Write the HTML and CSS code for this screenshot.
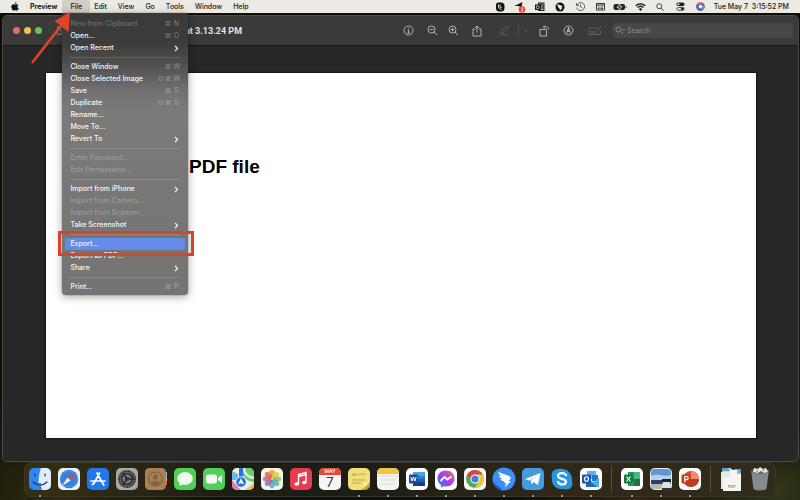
FILE: index.html
```html
<!DOCTYPE html>
<html lang="en">
<head>
<meta charset="utf-8">
<title>Preview</title>
<link rel="stylesheet" href="styles.css">
</head>
<body>
<header class="menubar">
  <button class="apple" aria-label="Apple menu"><svg width="8" height="9" viewBox="0 0 16 18"><path fill="#111" d="M11 0c.2 1.800-1.300 3.800-3.200 4C7.500 2.200 9 .4 11 0zM8.200 5.200C9 5.200 10 4.300 11.600 4.300c1.300 0 2.500.7 3.200 1.700-2.800 1.700-2.400 5.400.6 6.600-.7 2-2.200 4.700-3.900 4.700-1.200 0-1.600-.8-3.100-.8s-2 .8-3.100.8C3.200 17.300.6 13 .6 9.600c0-3.300 2.100-5.200 4.200-5.200 1.500 0 2.500.8 3.400.8z"/></svg></button>
  <nav class="menus">
    <button class="app-name">Preview</button>
    <div class="menu-holder">
      <button class="active">File</button>
      <ul class="menu">
        <li><button disabled>New from Clipboard <span class="keys">⌘<b>N</b></span></button></li>
        <li><button>Open... <span class="keys">⌘<b>O</b></span></button></li>
        <li><button>Open Recent <svg class="more" viewBox="0 0 5 7"><path d="M1 .8l2.500 2.700L1 6.200"/></svg></button></li>
        <li class="rule"></li>
        <li><button>Close Window <span class="keys">⌘<b>W</b></span></button></li>
        <li><button>Close Selected Image <span class="keys">⇧⌘<b>W</b></span></button></li>
        <li><button>Save <span class="keys">⌘<b>S</b></span></button></li>
        <li><button>Duplicate <span class="keys">⇧⌘<b>S</b></span></button></li>
        <li><button>Rename...</button></li>
        <li><button>Move To...</button></li>
        <li><button>Revert To <svg class="more" viewBox="0 0 5 7"><path d="M1 .8l2.500 2.700L1 6.200"/></svg></button></li>
        <li class="rule"></li>
        <li><button disabled>Enter Password...</button></li>
        <li><button disabled>Edit Permissions...</button></li>
        <li class="rule"></li>
        <li><button>Import from iPhone <svg class="more" viewBox="0 0 5 7"><path d="M1 .8l2.500 2.700L1 6.200"/></svg></button></li>
        <li><button disabled>Import from Camera...</button></li>
        <li><button disabled>Import from Scanner...</button></li>
        <li><button>Take Screenshot <svg class="more" viewBox="0 0 5 7"><path d="M1 .8l2.500 2.700L1 6.200"/></svg></button></li>
        <li class="rule"></li>
        <li class="marked"><button class="selected">Export...</button></li>
        <li><button>Export as PDF...</button></li>
        <li><button>Share <svg class="more" viewBox="0 0 5 7"><path d="M1 .8l2.500 2.700L1 6.200"/></svg></button></li>
        <li class="rule"></li>
        <li><button>Print... <span class="keys">⌘<b>P</b></span></button></li>
      </ul>
      <svg class="arrow" width="44" height="56" viewBox="0 0 44 56"><path d="M2 52L30 16" stroke="#e2432a" stroke-width="2.600"/><path d="M40 1L38.500 21 24.500 10z" fill="#e2432a"/></svg>
    </div>
    <button>Edit</button>
    <button>View</button>
    <button>Go</button>
    <button>Tools</button>
    <button>Window</button>
    <button>Help</button>
  </nav>
  <div class="status">
    <span><svg width="10" height="10" viewBox="0 0 20 20"><path fill="#111" d="M6 1h6a7 7 0 0 1 7 7v4a7 7 0 0 1-7 7H9a7 7 0 0 1-7-7V6a5 5 0 0 1 4-5z"/><path d="M7 5v5c0 3 3 5 6 5M10 5v5l4 2" fill="none" stroke="#eceae2" stroke-width="1.800"/></svg></span>
    <span><svg width="12" height="12" viewBox="0 0 24 24"><path fill="#111" d="M1 10L17 2l-3 12-4-4z"/><circle cx="16" cy="17" r="6.500" fill="#e8412e"/><path d="M14 14.500c3-2 5 0 3 2.500l-3 3h5" stroke="#fff" stroke-width="1.500" fill="none"/></svg></span>
    <span><svg width="10" height="10" viewBox="0 0 20 20"><path d="M6 1h13v17H6z" fill="#222"/><path d="M8 4h3m2 0h4M12 8h5m-5 4h5M8 15h9" stroke="#eceae2" stroke-width="1.500"/><path d="M0 5h11v11H0z" fill="#111"/><circle cx="5.500" cy="10.500" r="3" fill="none" stroke="#eceae2" stroke-width="1.600"/></svg></span>
    <span><svg width="10" height="10" viewBox="0 0 20 20"><circle cx="10" cy="10" r="9" fill="#111"/><path d="M4 4l11 4-2 4h2l-6 6 1-4-3-2z" fill="#eceae2"/></svg></span>
    <span><svg width="9" height="9" viewBox="0 0 18 18"><path d="M2 6a8 8 0 1 1-.500 5M1 2v5h5M9 4.500V10l3.500 2" fill="none" stroke="#444" stroke-width="1.600"/></svg></span>
    <span><svg width="9" height="8" viewBox="0 0 18 16"><path d="M1 1h16v13H1zM1 4h16M4 8h3m2 0h5M4 11h3m2 0h5" fill="none" stroke="#222" stroke-width="1.800"/></svg></span>
    <span><svg width="14" height="8" viewBox="0 0 28 16"><rect x="1" y="2" width="23" height="12" rx="4" fill="#222"/><path d="M26 6v4" stroke="#555" stroke-width="2"/><path d="M14 0L8 9h4l-1 7 7-9h-4z" fill="#222" stroke="#eceae2" stroke-width="1.500"/></svg></span>
    <span><svg width="11" height="8" viewBox="0 0 22 16"><path d="M1.500 5.500a14 14 0 0 1 19 0M5 9.200a9 9 0 0 1 12 0" fill="none" stroke="#111" stroke-width="2.600"/><path d="M7.500 12a5 5 0 0 1 7 0L11 16z" fill="#111"/></svg></span>
    <span><svg width="8" height="8" viewBox="0 0 16 16"><circle cx="6.500" cy="6.500" r="5" fill="none" stroke="#222" stroke-width="1.600"/><path d="M10.300 10.300L15 15" stroke="#222" stroke-width="1.900"/></svg></span>
    <span><svg width="9" height="9" viewBox="0 0 18 18"><rect x="1" y="1" width="16" height="7" rx="3.500" fill="#222"/><circle cx="5" cy="4.500" r="2" fill="#eceae2"/><rect x="1.800" y="10.800" width="14.400" height="5.600" rx="2.800" fill="none" stroke="#222" stroke-width="1.600"/><circle cx="12.500" cy="13.600" r="2.800" fill="#222"/></svg></span>
    <span><svg width="9" height="9" viewBox="0 0 18 18"><circle cx="9" cy="9" r="8.500" fill="#43446a"/><path d="M3 5a7 7 0 0 1 11-1" stroke="#e86ca0" stroke-width="3.500" fill="none"/><path d="M15 6a7 7 0 0 1-4 9" stroke="#50a7e8" stroke-width="3.500" fill="none"/><path d="M9 15.500A7 7 0 0 1 2.500 7" stroke="#4f63d8" stroke-width="3.500" fill="none"/><circle cx="9" cy="9" r="4" fill="#e9ecfb"/></svg></span>
    <time>Tue May 7&nbsp; 3:15:52 PM</time>
  </div>
</header>

<main class="window">
  <div class="titlebar">
    <div class="lights"><button class="close" aria-label="Close"></button><button class="minimize" aria-label="Minimize"></button><button class="zoom" aria-label="Zoom"></button></div>
    <svg class="sidebar-icon" width="12" height="9" viewBox="0 0 24 18"><path d="M1 1h22v16H1zM8 1v16" fill="none" stroke="#8b8b89" stroke-width="1.800"/></svg>
    <h1 class="title">at 3.13.24 PM</h1>
    <div class="tools">
      <button class="info" aria-label="Info"><svg width="11" height="11" viewBox="0 0 22 22"><circle cx="11" cy="11" r="9"/><path d="M9 10h2.500v6M8.500 16h5.500M11 5.500v2"/></svg></button>
      <button aria-label="Zoom out"><svg width="11" height="11" viewBox="0 0 22 22"><circle cx="9" cy="9" r="7"/><path d="M14 14l6 6M5.500 9h7"/></svg></button>
      <button aria-label="Zoom in"><svg width="11" height="11" viewBox="0 0 22 22"><circle cx="9" cy="9" r="7"/><path d="M14 14l6 6M5.500 9h7M9 5.500v7"/></svg></button>
      <button class="share" aria-label="Share"><svg width="10" height="12" viewBox="0 0 20 24"><path d="M6 8H2v14h16V8h-4M10 15V2M6 6l4-4 4 4"/></svg></button>
      <button class="highlight faint" aria-label="Highlight"><svg width="11" height="11" viewBox="0 0 22 22"><path d="M5 12L15 2l4 3-9 10-6 2zM1 20h19"/></svg></button>
      <button class="pull faint" aria-label="Highlight colour"><svg width="6" height="5" viewBox="0 0 12 10"><path d="M2 3l4 4 4-4"/></svg></button>
      <button class="wide" aria-label="Rotate"><svg width="11" height="12" viewBox="0 0 22 24"><path d="M2 9h13v13H2zM9 4h6c3 0 4 2 4 5M12 1L9 4l3 3"/></svg></button>
      <button class="wide" aria-label="Markup"><svg width="11" height="11" viewBox="0 0 22 22"><circle cx="11" cy="11" r="9"/><path d="M7 17l4-12 4 12M8.500 13h5M11 6v5"/></svg></button>
      <button class="form faint" aria-label="Form filling"><svg width="14" height="11" viewBox="0 0 28 22"><path d="M20 6H2v13h23v-8M5 13h3m2 0h3m2 0h3M5 16h14M18 13l8-10"/></svg></button>
    </div>
    <label class="search"><svg width="11" height="9" viewBox="0 0 22 18"><circle cx="7" cy="7" r="5"/><path d="M11 11l5 5M15 6l2.500 2.500L20 6"/></svg><input type="search" placeholder="Search" aria-label="Search"></label>
  </div>
  <div class="canvas">
    <article class="page"><h2>PDF file</h2></article>
  </div>
</main>

<footer class="dock-area">
  <ul class="dock">
    <li class="open"><svg viewBox="0 0 22 22"><rect width="22" height="22" rx="5" fill="#2f86ee"/><path d="M12 0h5a5 5 0 0 1 5 5v12a5 5 0 0 1-5 5h-4c-.7-2-1-4-1-7H9.500C9.500 9 10.500 4 12 0z" fill="#e4edf6"/><path d="M6 6v2M16 6v2M4 14c4 4 10 4 14 0" stroke="#18365e" stroke-width="1.200" fill="none" stroke-linecap="round"/></svg></li>
    <li><svg viewBox="0 0 22 22"><rect width="22" height="22" rx="5" fill="#eef0f3"/><circle cx="11" cy="11" r="9.200" fill="#2f82e0"/><circle cx="11" cy="11" r="7.600" fill="none" stroke="#8dbcf1" stroke-width=".8" stroke-dasharray=".5 1"/><path d="M18 4l-5.500 8.500-3-3z" fill="#e84436"/><path d="M4 18l5.500-8.500 3 3z" fill="#f3f3f3"/></svg></li>
    <li><svg viewBox="0 0 22 22"><rect width="22" height="22" rx="5" fill="#2377ea"/><path d="M12.500 5L7 15.500M10 5l5.500 10M4 13h9m3 0h2M5.500 16.500l.7-1.200M16 15.500l.8 1.500" stroke="#fff" stroke-width="1.700" stroke-linecap="round"/></svg></li>
    <li><svg viewBox="0 0 22 22"><rect width="22" height="22" rx="5" fill="#a7a9ad"/><circle cx="11" cy="11" r="8" fill="#77797c" stroke="#303134" stroke-width="2" stroke-dasharray="1.200 .4"/><circle cx="11" cy="11" r="5.500" fill="none" stroke="#28292b" stroke-width="1.600"/><path d="M11 11h7M11 11L7 5M11 11l-4 6" stroke="#28292b" stroke-width="1.400"/><circle cx="11" cy="11" r="2" fill="#303134"/></svg></li>
    <li><svg viewBox="0 0 22 22"><path d="M18 4h4v5h-4z" fill="#69b9e4"/><path d="M18 9h4v4h-4z" fill="#f0bd4c"/><path d="M18 13h4v4h-4z" fill="#df5e4c"/><rect width="21" height="22" rx="4.500" fill="#a98152"/><circle cx="10.500" cy="11" r="7" fill="none" stroke="#7f5f3b" stroke-width="1.200"/><circle cx="10.500" cy="9" r="2.500" fill="#846340"/><path d="M5.800 15.500c1-4 8.400-4 9.400 0a7 7 0 0 1-9.400 0z" fill="#846340"/></svg></li>
    <li><svg viewBox="0 0 22 22"><rect width="22" height="22" rx="5" fill="#51ce57"/><ellipse cx="11" cy="10.500" rx="7.800" ry="6.500" fill="#eff8ec"/><path d="M6 14l-1 4 5-2z" fill="#eff8ec"/></svg></li>
    <li><svg viewBox="0 0 22 22"><rect width="22" height="22" rx="5" fill="#55ce59"/><rect x="3" y="6.500" width="11" height="9" rx="2.500" fill="#f0f8ef"/><path d="M15 10l4-3v8l-4-3z" fill="#f0f8ef"/></svg></li>
    <li><svg viewBox="0 0 22 22"><defs><clipPath id="map"><rect width="22" height="22" rx="5"/></clipPath></defs><g clip-path="url(#map)"><path d="M0 0h22v22H0z" fill="#eef0eb"/><path d="M9 0h13v14C16 14 9 9 9 0z" fill="#67cb68"/><path d="M12 0c0 6 4 9 10 10" stroke="#e4e7df" stroke-width="2.500" fill="none"/><path d="M0 3l6 3v6H0z" fill="#64bce9"/><path d="M0 12l9 10H0z" fill="#eb7aac"/><path d="M22 15l-9 7h9z" fill="#f3be4a"/><path d="M7 0h4v12H7z" fill="#2871df"/><circle cx="9" cy="14" r="5.300" fill="#2871df" stroke="#fff" stroke-width=".8"/><path d="M9 10l3 6.500-3-1.500-3 1.500z" fill="#fff"/></g></svg></li>
    <li><svg viewBox="0 0 22 22"><rect width="22" height="22" rx="5" fill="#f4f3f0"/><g fill-opacity=".85"><ellipse cx="11" cy="6" rx="2.800" ry="4.200" fill="#f49a31"/><ellipse cx="11" cy="6" rx="2.800" ry="4.200" fill="#e7cf36" transform="rotate(45 11 11)"/><ellipse cx="11" cy="6" rx="2.800" ry="4.200" fill="#8fc450" transform="rotate(90 11 11)"/><ellipse cx="11" cy="6" rx="2.800" ry="4.200" fill="#55b898" transform="rotate(135 11 11)"/><ellipse cx="11" cy="6" rx="2.800" ry="4.200" fill="#659cdb" transform="rotate(180 11 11)"/><ellipse cx="11" cy="6" rx="2.800" ry="4.200" fill="#8e70b9" transform="rotate(225 11 11)"/><ellipse cx="11" cy="6" rx="2.800" ry="4.200" fill="#ca6a92" transform="rotate(270 11 11)"/><ellipse cx="11" cy="6" rx="2.800" ry="4.200" fill="#eb634c" transform="rotate(315 11 11)"/></g></svg></li>
    <li><svg viewBox="0 0 22 22"><rect width="22" height="22" rx="5" fill="#e63d4e"/><path d="M8.500 15.500V6.500l7.500-2V14M8.500 8.500l7.500-2" stroke="#fff" stroke-width="1.400" fill="none"/><ellipse cx="6.800" cy="16" rx="2.300" ry="1.800" fill="#fff"/><ellipse cx="14.300" cy="14.500" rx="2.300" ry="1.800" fill="#fff"/></svg></li>
    <li><div class="calendar"><span>MAY</span><strong>7</strong></div></li>
    <li class="open"><svg viewBox="0 0 22 22"><path d="M5 0h12a5 5 0 0 1 5 5v9l-8 8H5a5 5 0 0 1-5-5V5a5 5 0 0 1 5-5z" fill="#f2df78"/><path d="M22 14l-8 8h3a5 5 0 0 0 5-5z" fill="#c7aa38"/><path d="M22 14c-3 1-6 0-6 2s0 5-2 6z" fill="#fff0a0"/><path d="M4 8c2-5 2-2 2 0 2-4 2-2 3-1 2-2 3 0 4-1h5M4 12h13M4 15h9" stroke="#a99945" stroke-width=".8" fill="none"/></svg></li>
    <li class="open"><svg viewBox="0 0 22 22"><rect width="22" height="22" rx="5" fill="#f5f4ef"/><path d="M5 0h12a5 5 0 0 1 5 5v1H0V5a5 5 0 0 1 5-5z" fill="#f5c442"/><path d="M0 8h22M3 12h16M3 16h16" stroke="#d0cfc9" stroke-width=".7"/></svg></li>
    <li class="open"><svg viewBox="0 0 22 22"><rect width="22" height="22" rx="5" fill="#fff"/><path d="M7 4h12v4H7z" fill="#4ba3e6"/><path d="M7 8h12v3H7z" fill="#2f7ed2"/><path d="M7 11h12v3H7z" fill="#2062b9"/><path d="M7 14h12v4H7z" fill="#173f84"/><rect x="3" y="6.500" width="9" height="9" rx="1" fill="#1c4e9e"/><path d="M4.800 9l1.300 4 1.400-4 1.400 4 1.300-4" fill="none" stroke="#fff"/></svg></li>
    <li class="open"><svg viewBox="0 0 22 22"><defs><linearGradient id="msg" x1="0" y1="1" x2="1" y2="0"><stop stop-color="#1785ff"/><stop offset=".5" stop-color="#a43cf4"/><stop offset="1" stop-color="#ff6b62"/></linearGradient></defs><rect width="22" height="22" rx="5" fill="#fff"/><path d="M11 2.500c5 0 8.500 3.400 8.500 8s-3.500 8-8.500 8l-2.500-.3L6 19.500V17c-2-1.500-3.500-3.700-3.500-6.500 0-4.600 3.500-8 8.500-8z" fill="url(#msg)"/><path d="M5.500 13l4-4 2.800 2.500 4.200-3" stroke="#fff" stroke-width="1.800" fill="none"/></svg></li>
    <li class="open"><svg viewBox="0 0 22 22"><rect width="22" height="22" rx="5" fill="#f8f8f6"/><circle cx="11" cy="11" r="9" fill="#4aac52"/><path d="M3.200 6.500A9 9 0 0 1 18.800 6.500H11L7 13z" fill="#dd473b"/><path d="M18.800 6.500A9 9 0 0 1 10.500 20l4.400-7L13 6.500z" fill="#f2c53c"/><circle cx="11" cy="11" r="4.600" fill="#fff"/><circle cx="11" cy="11" r="3.600" fill="#3f80e6"/></svg></li>
    <li class="open"><svg viewBox="0 0 22 22"><circle cx="11" cy="11" r="11.500" fill="#3b8ff0"/><path d="M0 14l10 8.500A11.500 11.500 0 0 1 0 14z" fill="#264ed4"/><path d="M5 4l11 4c2 .8 2 2 1 3.500L15.500 13H18l-6 6.500 1-4.500h-2l1-1.500c-3 0-4-1-4.500-2.500l3 .3C7.500 10.500 6 9 6 7.500l3 .5C7 7 5 5.500 5 4z" fill="#fff"/></svg></li>
    <li class="open"><svg viewBox="0 0 22 22"><rect width="22" height="22" rx="5" fill="#469ade"/><path d="M3 11L18.500 5 16 17l-4.500-3-2 2.200-.7-4L14.500 8 7.500 12.500z" fill="#fff"/></svg></li>
    <li class="open"><svg viewBox="0 0 22 22"><path d="M7 1c7-1.500 15 3 14 12 2 6-3 10-8 8C5 22 0 17 1 10-.5 5 2 1 7 1z" fill="#2796dc"/><path d="M15 7c-2-3-8-2-8 .7 0 4 8 2.300 8 6C15 17 8.500 17.500 7 14" fill="none" stroke="#fff" stroke-width="2.200" stroke-linecap="round"/></svg></li>
    <li class="open"><svg viewBox="0 0 22 22"><rect width="22" height="22" rx="5" fill="#fff"/><path d="M7 3h9v8H7z" fill="#55b4ed"/><path d="M12 7h6v6h-6z" fill="#2479ce"/><path d="M6 10l7 4 6-4v9H6z" fill="#4daeea"/><path d="M6 10l11 9H6z" fill="#2468b4"/><rect x="2" y="6.500" width="9" height="9" rx="1" fill="#1b5ba9"/><ellipse cx="6.500" cy="11" rx="2" ry="2.300" fill="none" stroke="#fff" stroke-width="1.100"/></svg></li>
    <li class="divider"></li>
    <li class="open"><svg viewBox="0 0 22 22"><rect width="22" height="22" rx="5" fill="#fff"/><path d="M7 4h6v14H7z" fill="#269560"/><path d="M13 4h6v7h-6z" fill="#43bd7b"/><path d="M13 11h6v7h-6z" fill="#217346"/><rect x="3" y="6.500" width="9" height="9" rx="1" fill="#167943"/><path d="M5.500 8.500l4 5m0-5l-4 5" stroke="#fff" stroke-width="1.200"/></svg></li>
    <li class="open"><svg viewBox="0 0 22 22"><rect width="22" height="22" rx="5" fill="#eee"/><rect x="1" y="1" width="20" height="20" rx="4" fill="#6294d4"/><path d="M1 8c6-3 12 1 20-1v5H1z" fill="#b8cfe9"/><path d="M1 12h20v4H1z" fill="#28416b"/><path d="M1 16h20v1a4 4 0 0 1-4 4H5a4 4 0 0 1-4-4z" fill="#b9b9a8"/><path d="M12 11h9v3h-9z" fill="#222"/><path d="M13 14h7l2 7H11z" fill="#d9e1e6"/><path d="M12 20h10v2H12z" fill="#343434"/></svg></li>
    <li class="open"><svg viewBox="0 0 22 22"><rect width="22" height="22" rx="5" fill="#fff"/><circle cx="12" cy="11" r="8" fill="#d35230"/><path d="M12 3a8 8 0 0 1 8 8h-8z" fill="#f18b69"/><path d="M12 11h8a8 8 0 0 1-14 5z" fill="#bd3b21"/><rect x="2.500" y="6.500" width="9" height="9" rx="1" fill="#c43e1c"/><path d="M5.800 14V8.500h1.800a1.500 1.500 0 0 1 0 3.200H5.800" stroke="#fff" stroke-width="1.200" fill="none"/></svg></li>
    <li class="divider"></li>
    <li class="files"><svg viewBox="0 0 22 22"><path d="M2 0h8l5 3v14H2z" fill="#cfd6d8"/><path d="M2 0h6l2 3H2zM14 1h7v5h-7z" fill="#58a6cb"/><path d="M1 4h12v17H1z" fill="#e7e7e4"/><path d="M10 2h7l4 4v17H3V9h7z" fill="#f5f5f3"/><path d="M17 2v4h4z" fill="#94b8c8"/></svg><span>PDF</span></li>
    <li><svg viewBox="0 0 22 22"><path d="M2 2h18l-2.500 19c-2 2-11 2-13 0z" fill="#7e8588"/><path d="M4.500 5l1.500 15M8 5l.7 16M11 5v16M14 5l-.7 16M17.500 5L16 20" stroke="#969da0" stroke-width=".7"/><ellipse cx="11" cy="3" rx="9" ry="2.500" fill="#585d60"/><path d="M4 4l1-4 4 1 2-2 3 2 3-1 2 4-4 1-3-2-3 2z" fill="#e8e7e3"/><path d="M7 2l2 2m5-3l1 2" stroke="#ae5f55"/></svg></li>
  </ul>
</footer>
</body>
</html>
```
FILE: styles.css
```css
* { box-sizing: border-box; }

body {
  margin: 0;
  height: 100vh;
  display: flex;
  flex-direction: column;
  overflow: hidden;
  font: 500 7px/12px Inter, "Liberation Sans", sans-serif;
  background:
    radial-gradient(ellipse at 97% 98%, #343719 0, transparent 10%),
    radial-gradient(ellipse at 80% 100%, #352317 0, transparent 14%),
    radial-gradient(ellipse at 8% 100%, #302b0e 0, transparent 16%),
    #0e0f08;
}

button {
  border: 0;
  padding: 0;
  background: none;
  font: inherit;
  color: inherit;
}

ul { list-style: none; margin: 0; padding: 0; }
svg { display: block; }

.menubar {
  display: flex;
  align-items: center;
  height: 13px;
  padding: 0 11px;
  background: #eceae2;
  color: #191919;
  position: relative;
  z-index: 2;
}

.apple { margin-right: 11px; }
.menus { display: flex; }
.menus > button { padding: 0 6px 0 5px; }
.menus > .app-name { padding: 0 7px 0 0; font-weight: 700; }
.menu-holder { position: relative; margin: 0 -1px 0 -2px; }

.active {
  display: block;
  height: 13px;
  padding: 0 8px;
  background: #d0cec7;
  border-radius: 2px;
}

.menu {
  position: absolute;
  top: 13px;
  left: 0;
  width: 126px;
  padding: 5px 3px 2px;
  border-radius: 0 0 4px 4px;
  background: linear-gradient(#3a3a38 0, #3c3c3a 30px, #505050 52px, #737373 80px, #7a7a79 100px, #747473);
  box-shadow: 0 2px 8px rgba(0, 0, 0, .35), 0 0 1px #222;
  color: #f5f5f5;
}

.menu button {
  display: flex;
  justify-content: space-between;
  align-items: center;
  width: 100%;
  height: 12px;
  padding: 0 5px;
  border-radius: 2px;
}

.menu button:disabled { color: rgba(255, 255, 255, .26); }
.menu .selected { background: #648be8; }
.keys { display: flex; gap: 1px; color: rgba(255, 255, 255, .3); }
.keys b { width: 8px; font-weight: 500; text-align: center; }
.more { width: 5px; height: 7px; margin-right: 1px; fill: none; stroke: #f5f5f5; stroke-width: 1.2; }

.rule { height: 7px; padding: 3px 5px; }
.rule::before { content: ""; display: block; height: 1px; background: rgba(255, 255, 255, .14); }

.marked { position: relative; }
.marked::after {
  content: "";
  position: absolute;
  inset: -7px -9px -6px -7px;
  border: 3px solid #d8432c;
}

.arrow { position: absolute; left: -32px; top: 11px; }

.status { display: flex; margin-left: auto; align-items: center; }
.status span { width: 20px; display: grid; place-items: center; }
.status time { min-width: 79px; text-align: right; }

.window {
  flex: 1;
  display: flex;
  flex-direction: column;
  margin: 2px 1px 0 2px;
  border: 1px solid #4b4b49;
  border-radius: 5px;
  background: #272727;
  overflow: hidden;
}

.titlebar {
  display: flex;
  align-items: center;
  height: 30px;
  padding: 0 5px 0 10px;
  background: #3a3a38;
  border-bottom: 1px solid #191919;
  color: #e4e4e3;
}

.lights { display: flex; gap: 4px; }
.lights button { width: 7px; height: 7px; border-radius: 50%; }
.close { background: #ec6a5e; }
.minimize { background: #f4bf4f; }
.zoom { background: #61c554; }
.sidebar-icon { margin-left: 15px; }
.title { margin: 0 0 0 116px; font: 700 9px/12px Roboto, sans-serif; white-space: nowrap; }

.tools { display: flex; margin-left: auto; align-items: center; }
.tools button { display: grid; place-items: center; width: 21px; height: 14px; }
.tools .wide { width: 24px; }
.tools .share { width: 26px; }
.tools .info, .tools .highlight { width: 28px; }
.tools .pull { width: 14px; border-left: 1px solid #4b4b49; }
.tools .form { width: 30px; }
.tools svg, .search svg { fill: none; stroke: #c6c6c4; stroke-width: 1.7; }
.tools .faint svg { stroke: #646462; }

.search {
  display: flex;
  align-items: center;
  width: 180px;
  height: 15px;
  margin-left: 3px;
  padding: 0 2px;
  border-radius: 3px;
  background: #474745;
}

.search svg { stroke: #949492; }
.search input {
  flex: 1;
  min-width: 0;
  margin-left: 1px;
  padding: 0;
  border: 0;
  outline: 0;
  background: none;
  color: #eee;
  font: 400 7px/12px Inter, sans-serif;
}
.search input::placeholder { color: #8d8d8b; }

.canvas { flex: 1; display: flex; padding: 27px 42px 23px 43px; }
.page { flex: 1; background: #fff; box-shadow: 0 0 1px 1px #161616; }
.page h2 {
  margin: 82px 0 0 143px;
  font: 700 19px/24px "Liberation Sans", Arial, sans-serif;
  color: #000;
}

.dock-area { padding: 0 3% 3px; }
.dock {
  display: flex;
  justify-content: space-between;
  align-items: center;
  height: 35px;
  padding: 0 4px 2px;
  border: 1px solid #38362a;
  border-radius: 8px;
  background: linear-gradient(90deg, #363013, #1c1d15 28%, #1c1d16 45%, #302818 70%, #302c1c);
}

.dock li { position: relative; width: 22px; height: 22px; }
.dock li > svg { width: 22px; height: 22px; overflow: visible; }
.dock .divider { width: 1px; height: 26px; margin: 0 2px; background: #555041; }
.open::after {
  content: "";
  position: absolute;
  left: 10px;
  bottom: -7px;
  width: 2px;
  height: 2px;
  border-radius: 50%;
  background: #bbb9b0;
}

.calendar {
  height: 22px;
  border-radius: 5px;
  overflow: hidden;
  background: #f7f6f3;
  text-align: center;
}
.calendar span { display: block; background: #e3493f; color: #fff; font-size: 5px; line-height: 7px; }
.calendar strong { display: block; color: #333; font-size: 13px; line-height: 15px; font-weight: 400; }
.files span { position: absolute; left: 8px; bottom: 1px; font-size: 4px; line-height: 4px; color: #777; }
```
